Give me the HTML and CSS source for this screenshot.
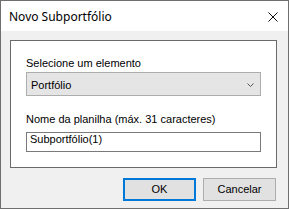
FILE: index.html
```html
<!DOCTYPE html>
<html lang="pt">
<head>
<meta charset="utf-8">
<title>Novo Subportfólio</title>
<link rel="stylesheet" href="styles.css">
</head>
<body>
<div class="window">
  <div class="titlebar">
    <span class="title">Novo Subportfólio</span>
    <svg class="close" width="10" height="10" viewBox="0 0 10 10">
      <path d="M0.5 0.5 L9.5 9.5 M9.5 0.5 L0.5 9.5" stroke="#111" stroke-width="1" fill="none"/>
    </svg>
  </div>
  <div class="content">
    <div class="panel">
      <div class="label">Selecione um elemento</div>
      <div class="select">
        <span class="select-text">Portfólio</span>
        <svg class="chevron" width="7" height="4" viewBox="0 0 7 4">
          <path d="M0.5 0.5 L3.5 3.5 L6.5 0.5" stroke="#555" stroke-width="1" fill="none"/>
        </svg>
      </div>
      <div class="label label-second">Nome da planilha (máx. 31 caracteres)</div>
      <div class="input">Subportfólio(1)</div>
    </div>
    <div class="buttons">
      <div class="button button-default">OK</div>
      <div class="button">Cancelar</div>
    </div>
  </div>
</div>
</body>
</html>
```

FILE: styles.css
```css
html, body {
  margin: 0;
  padding: 0;
  background: #ffffff;
}

.window {
  width: 289px;
  height: 209px;
  box-sizing: border-box;
  border: 1px solid #6f6f6f;
  display: flex;
  flex-direction: column;
  font-family: "Liberation Sans", Arial, sans-serif;
  font-size: 11px;
  color: #000;
}

.titlebar {
  height: 30px;
  flex: none;
  background: #ffffff;
  display: flex;
  align-items: center;
  justify-content: space-between;
  padding: 0 10px 0 8px;
}

.title {
  font-family: "Noto Sans", "Liberation Sans", sans-serif;
  font-size: 12px;
  line-height: 16px;
  margin-top: 1px;
}

.close {
  display: block;
  margin-top: 1px;
}

.content {
  flex: 1;
  background: #f0f0f0;
  padding: 9px 11px 0 9px;
  display: flex;
  flex-direction: column;
}

.panel {
  background: #ffffff;
  border: 1px solid #6a6a6a;
  padding: 16px 15px 15px 15px;
  display: flex;
  flex-direction: column;
}

.label {
  line-height: 13px;
  height: 13px;
  white-space: nowrap;
}

.label-second {
  margin-top: 17px;
}

.select {
  margin-top: 2px;
  height: 24px;
  box-sizing: border-box;
  background: #e5e5e5;
  border: 1px solid #adadad;
  padding: 6px 6px 0 4px;
  display: flex;
  justify-content: space-between;
  align-items: flex-start;
  line-height: 13px;
}

.chevron {
  display: block;
  margin-top: 4px;
}

.input {
  margin-top: 6px;
  height: 20px;
  box-sizing: border-box;
  border: 1px solid #7a7a7a;
  padding: 0 3px;
  line-height: 13px;
  background: #fff;
}

.buttons {
  margin-top: 10px;
  margin-right: 1px;
  display: flex;
  justify-content: flex-end;
  gap: 7px;
}

.button {
  width: 73px;
  height: 23px;
  box-sizing: border-box;
  background: #e1e1e1;
  border: 1px solid #adadad;
  display: flex;
  align-items: center;
  justify-content: center;
  line-height: 13px;
}

.button-default {
  border: 2px solid #0078d7;
}
```
